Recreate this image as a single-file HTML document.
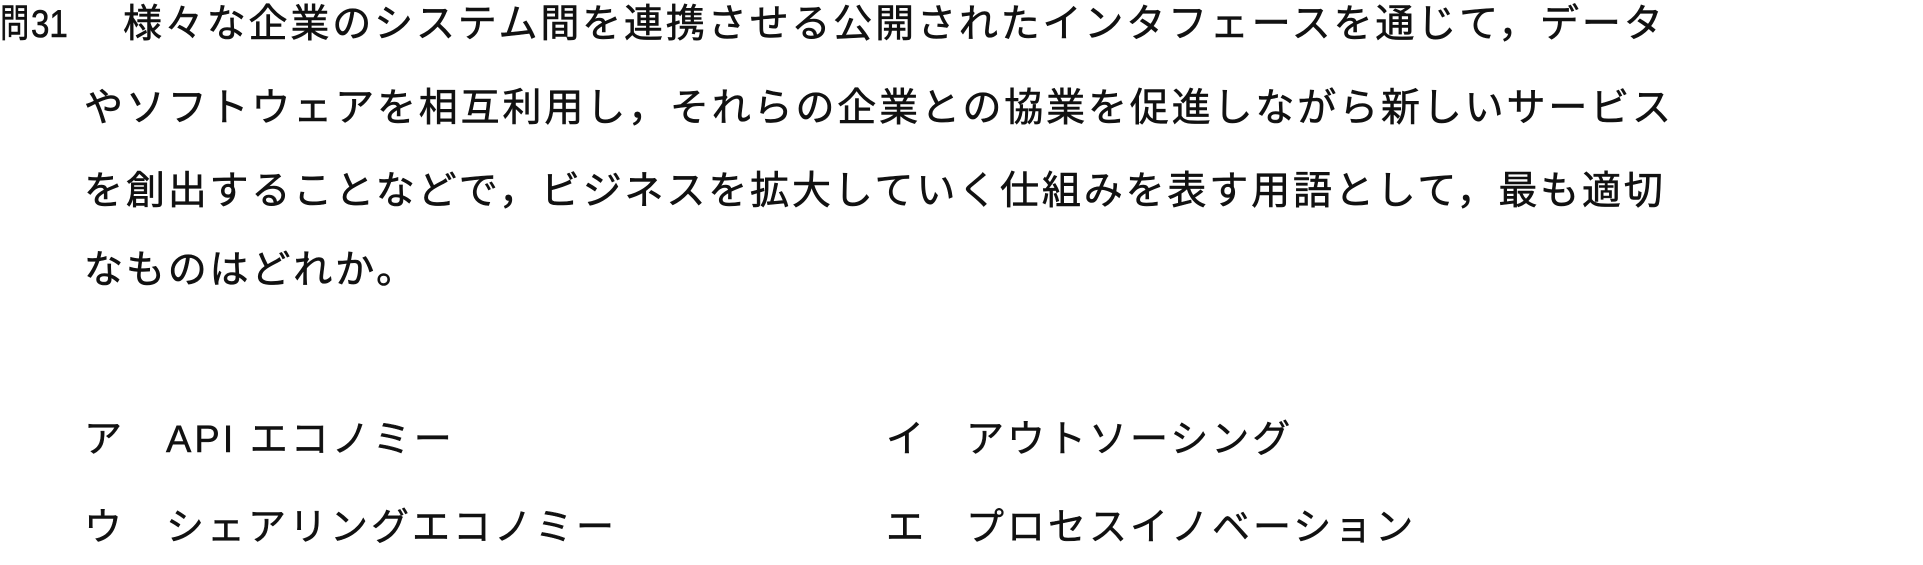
<!DOCTYPE html>
<html><head><meta charset="utf-8"><style>
html,body{margin:0;padding:0;background:#fff;}
body{width:1923px;height:565px;position:relative;overflow:hidden;font-family:"Liberation Sans","Noto Sans CJK JP",sans-serif;color:#111;}
.l{position:absolute;font-size:39px;line-height:50px;letter-spacing:2.85px;white-space:nowrap;-webkit-text-stroke:0.6px #111;}
.o{position:absolute;font-size:38px;line-height:50px;letter-spacing:3px;white-space:nowrap;-webkit-text-stroke:0.5px #111;}
</style></head><body>
<div class="l" style="left:0;top:0;letter-spacing:0"><span style="display:inline-block;transform:scaleX(0.75);transform-origin:left">問</span><span style="margin-left:-8px;display:inline-block;transform:scaleX(0.85);transform-origin:left">31</span></div>
<div class="l" style="left:123px;top:0">様々な企業のシステム間を連携させる公開されたインタフェースを通じて，データ</div>
<div class="l" style="left:84px;top:84px">やソフトウェアを相互利用し，それらの企業との協業を促進しながら新しいサービス</div>
<div class="l" style="left:84px;top:167px">を創出することなどで，ビジネスを拡大していく仕組みを表す用語として，最も適切</div>
<div class="l" style="left:84px;top:246px">なものはどれか。</div>
<div class="o" style="left:84px;top:415px">ア</div>
<div class="o" style="left:166px;top:415px">API エコノミー</div>
<div class="o" style="left:886px;top:415px">イ</div>
<div class="o" style="left:966px;top:415px">アウトソーシング</div>
<div class="o" style="left:84px;top:503px">ウ</div>
<div class="o" style="left:166px;top:503px">シェアリングエコノミー</div>
<div class="o" style="left:886px;top:503px">エ</div>
<div class="o" style="left:966px;top:503px">プロセスイノベーション</div>
</body></html>
